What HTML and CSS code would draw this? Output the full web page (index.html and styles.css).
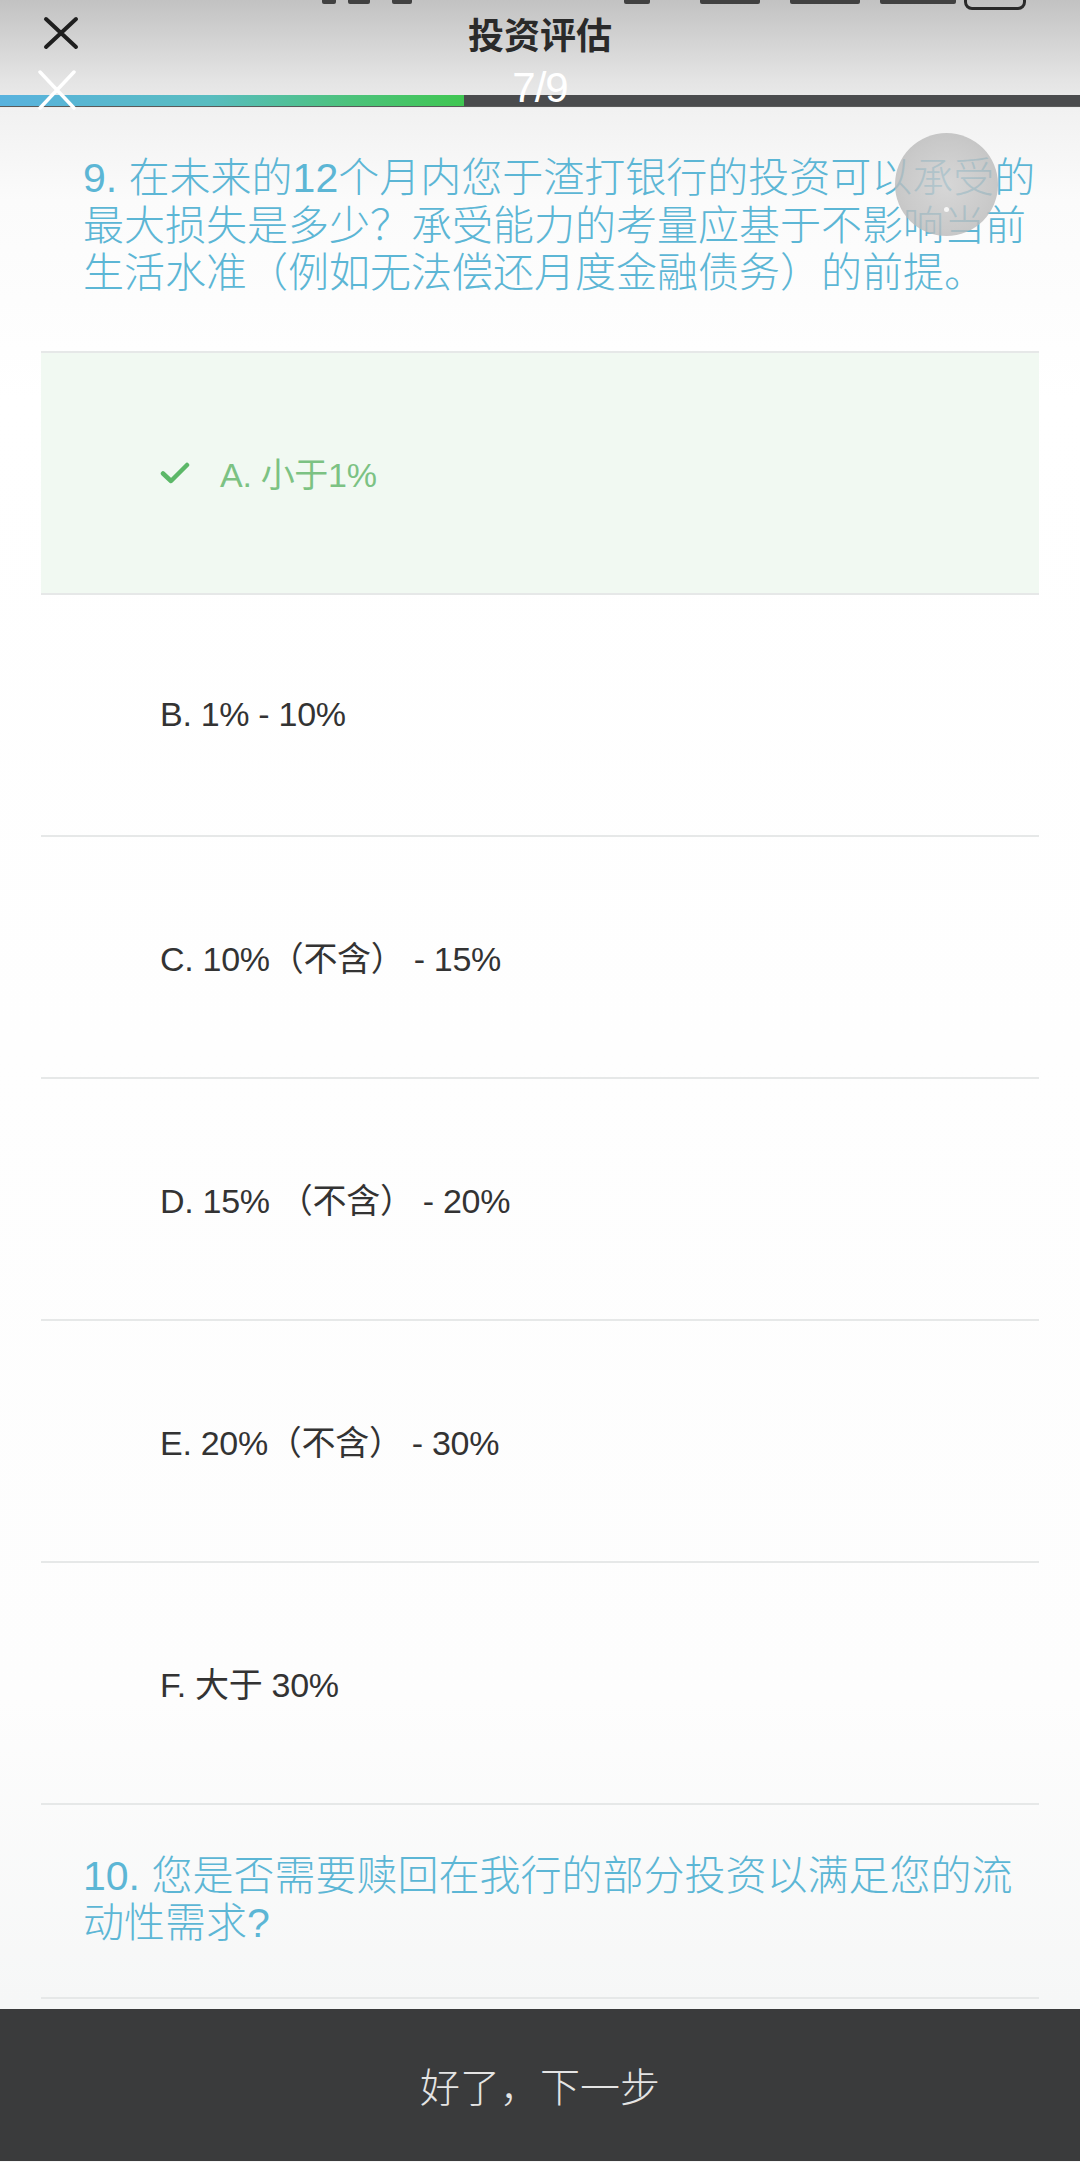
FILE: index.html
```html
<!DOCTYPE html>
<html lang="zh-CN">
<head>
<meta charset="utf-8">
<title>投资评估</title>
<link rel="stylesheet" href="styles.css">
</head>
<body>
<div class="page">
  <header class="header">
    <div class="status">
      <span class="frag f1"></span>
      <span class="frag f2"></span>
      <span class="frag f3"></span>
      <span class="frag f4"></span>
      <span class="frag f5"></span>
      <span class="frag f6"></span>
      <span class="frag f7"></span>
      <span class="st-battery"></span>
    </div>
    <div class="titlebar">
      <svg class="close-dark" width="36" height="34" viewBox="0 0 36 34"><path d="M3 3 L33 31 M33 3 L3 31" stroke="#1f1f1f" stroke-width="4" stroke-linecap="round" fill="none"/></svg>
      <h1 class="title">投资评估</h1>
      <span></span>
    </div>
    <div class="progress-row">
      <div class="bar"><div class="bar-fill"></div></div>
      <svg class="close-light" width="40" height="40" viewBox="0 0 40 40"><path d="M3 2 L37 38 M37 2 L3 38" stroke="#ffffff" stroke-width="3.5" stroke-linecap="round" fill="none"/></svg>
      <span class="step">7/9</span>
    </div>
  </header>

  <main class="content">
    <div class="question q9">9. 在未来的12个月内您于渣打银行的投资可以承受的<br>最大损失是多少？承受能力的考量应基于不影响当前<br>生活水准（例如无法偿还月度金融债务）的前提。</div>
    <ul class="options">
      <li class="opt selected">
        <svg class="check" width="30" height="24" viewBox="0 0 30 24"><path d="M3 12.5 L11 20 L27 4" stroke="#5cb868" stroke-width="4.5" stroke-linecap="round" stroke-linejoin="round" fill="none"/></svg>
        <span>A. 小于1%</span>
      </li>
      <li class="opt"><span>B. 1% - 10%</span></li>
      <li class="opt"><span>C. 10%（不含） - 15%</span></li>
      <li class="opt"><span>D. 15% （不含） - 20%</span></li>
      <li class="opt"><span>E. 20%（不含） - 30%</span></li>
      <li class="opt"><span>F. 大于 30%</span></li>
    </ul>
    <div class="question q10">10. 您是否需要赎回在我行的部分投资以满足您的流<br>动性需求?</div>
  </main>

  <footer class="footer">好了，下一步</footer>

  <div class="assist"><span class="assist-dot"></span></div>
</div>
</body>
</html>
```

FILE: styles.css
```css
* { box-sizing: border-box; }
html, body { margin: 0; padding: 0; }
body {
  width: 1080px;
  height: 2162px;
  overflow: hidden;
  background: #fbfbfb;
  font-family: "Liberation Sans", "Noto Sans CJK SC", sans-serif;
}
.page {
  position: relative;
  width: 1080px;
  height: 2162px;
  display: flex;
  flex-direction: column;
  background: linear-gradient(#f0f0f0 100px, #fbfbfb 200px, #ffffff 400px, #fdfdfd 1700px, #f6f7f7 2000px);
}

/* header */
.header {
  height: 108px;
  background: linear-gradient(#c2c2c2 0px, #d3d3d3 40px, #e4e4e4 80px, #ececec 108px);
}
.status {
  height: 10px;
  overflow: hidden;
  position: relative;
}
.frag {
  position: absolute;
  top: -4px;
  height: 8px;
  background: #2a2a2a;
  border-radius: 2px;
  opacity: 0.85;
}
.f1 { left: 322px; width: 14px; }
.f2 { left: 348px; width: 22px; }
.f3 { left: 392px; width: 20px; }
.f4 { left: 624px; width: 26px; }
.f5 { left: 700px; width: 60px; }
.f6 { left: 790px; width: 70px; }
.f7 { left: 880px; width: 76px; }
.st-battery {
  position: absolute;
  left: 964px;
  top: -22px;
  width: 62px;
  height: 32px;
  border: 3px solid #2a2a2a;
  border-radius: 8px;
}
.titlebar {
  height: 46px;
  display: grid;
  grid-template-columns: 1fr auto 1fr;
  align-items: center;
}
.close-dark { margin-left: 43px; }
.title {
  margin: 0;
  font-family: "Noto Sans CJK SC", sans-serif;
  font-size: 36px;
  font-weight: 700;
  color: #2a2a2a;
  line-height: 46px;
}
.progress-row {
  position: relative;
  height: 52px;
  padding-top: 39px;
}
.bar {
  height: 12px;
  background: #4a4b4d;
  border-bottom: 1px solid #5a5a5a;
}
.bar-fill {
  width: 464px;
  height: 100%;
  background: linear-gradient(90deg, #58b2de 0%, #58bcc0 45%, #4cc27c 75%, #3fc651 100%);
}
.close-light {
  position: absolute;
  left: 37px;
  top: 14px;
}
.step {
  position: absolute;
  left: 50%;
  top: 11px;
  transform: translateX(-50%);
  color: #ffffff;
  font-size: 42px;
  line-height: 42px;
  letter-spacing: -1px;
}

/* content */
.content {
  padding: 0 41px;
}
.question {
  font-family: "Liberation Sans", "Noto Sans CJK SC", sans-serif;
  font-size: 41px;
  font-weight: 300;
  color: #5cb6d5;
  white-space: nowrap;
  padding-left: 42px;
}
.q9 {
  line-height: 47.5px;
  padding-top: 47px;
  padding-bottom: 53px;
}
.q10 {
  line-height: 47px;
  padding-top: 48px;
  padding-bottom: 50px;
  border-bottom: 2px solid #e6e8e8;
}
.options {
  list-style: none;
  margin: 0;
  padding: 0;
  border-top: 2px solid #e6e8e8;
}
.opt {
  height: 242px;
  border-bottom: 2px solid #e6e8e8;
  display: flex;
  align-items: center;
  gap: 30px;
  padding-left: 119px;
  font-size: 34px;
  color: #333333;
  letter-spacing: -0.3px;
}
.opt.selected {
  background: #f1f9f2;
  color: #7cc283;
}
.check { flex: none; }

/* footer */
.footer {
  margin-top: 10px;
  height: 152px;
  background: #3a3b3c;
  color: #e4e4e4;
  font-family: "Noto Sans CJK SC", sans-serif;
  font-size: 40px;
  font-weight: 300;
  display: flex;
  align-items: center;
  justify-content: center;
}

/* floating assistive button */
.assist {
  position: absolute;
  left: 895px;
  top: 133px;
  width: 103px;
  height: 103px;
  border-radius: 50%;
  background: radial-gradient(circle at 50% 50%, rgba(205,205,205,0.78) 0%, rgba(190,190,190,0.8) 60%, rgba(178,178,178,0.82) 100%);
  display: flex;
  align-items: center;
  justify-content: center;
}
.assist-dot {
  width: 5px;
  height: 5px;
  border-radius: 50%;
  background: rgba(255,255,255,0.8);
  margin-top: 50px;
}
```
